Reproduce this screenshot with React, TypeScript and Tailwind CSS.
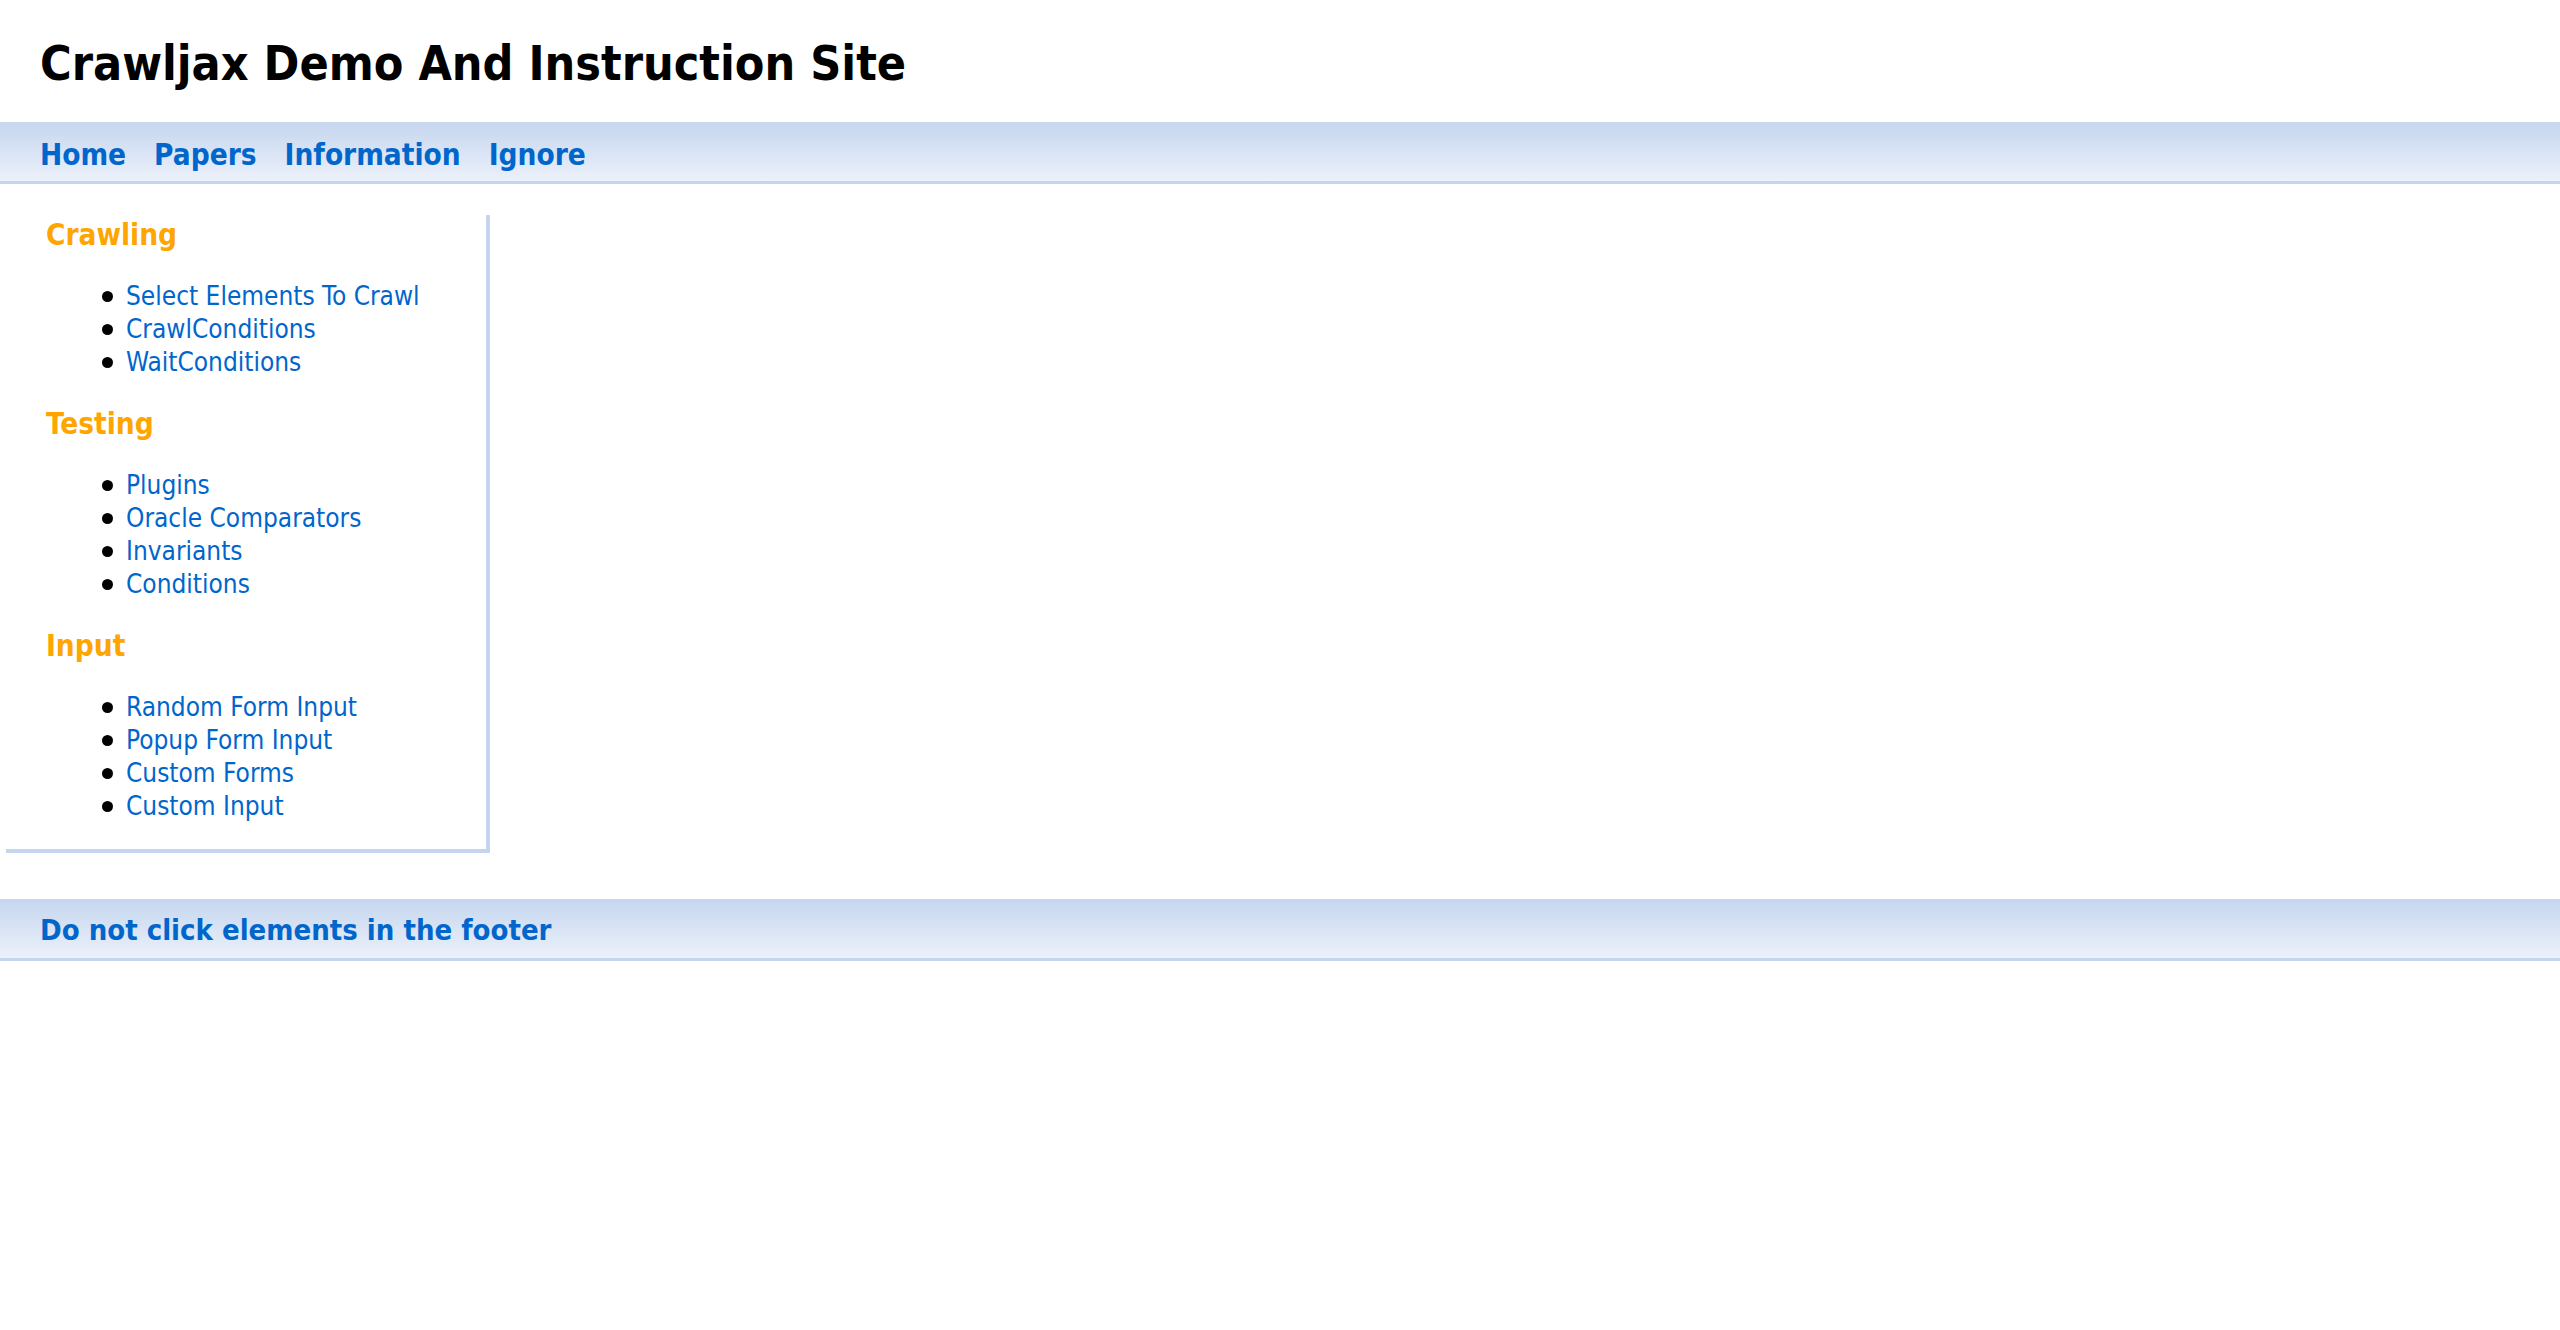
import React from "react";

const sections: { title: string; items: string[] }[] = [
  { title: "Crawling", items: ["Select Elements To Crawl", "CrawlConditions", "WaitConditions"] },
  { title: "Testing", items: ["Plugins", "Oracle Comparators", "Invariants", "Conditions"] },
  { title: "Input", items: ["Random Form Input", "Popup Form Input", "Custom Forms", "Custom Input"] },
];

export default function App() {
  return (
    <div className="min-h-screen bg-white font-['DejaVu_Sans_Condensed','DejaVu_Sans',sans-serif]">
      <header className="h-[122px] flex items-center pl-[40px] pt-[4px]">
        <h1 className="text-[48px] leading-[58px] font-bold text-black">Crawljax Demo And Instruction Site</h1>
      </header>
      <nav className="h-[62px] bg-gradient-to-b from-[#c5d6ee] to-[#ecf1fb] border-b-[3px] border-[#c5d5ed] flex items-center pl-[40px] pt-[7px] gap-[28px]">
        {["Home", "Papers", "Information", "Ignore"].map((l) => (
          <a key={l} href="#" className="text-[29.5px] font-bold text-[#0066cc] leading-[36px]">
            {l}
          </a>
        ))}
      </nav>
      <aside className="mt-[31px] ml-[6px] w-[484px] border-r-4 border-b-4 border-[#c5d5ed] pl-[40px] pt-[3px] pb-[26px]">
        {sections.map((s, i) => (
          <div key={s.title}>
            <h2 className="text-[29.5px] leading-[34px] font-bold text-[#ffa500]">{s.title}</h2>
            <ul className={i === sections.length - 1 ? "mt-[28px]" : "my-[28px]"}>
              {s.items.map((it) => (
                <li key={it} className="flex items-center h-[33px]">
                  <span className="ml-[56px] w-[11px] h-[11px] rounded-full bg-black shrink-0"></span>
                  <a href="#" className="ml-[13px] text-[26px] leading-[33px] text-[#0066cc]">
                    {it}
                  </a>
                </li>
              ))}
            </ul>
          </div>
        ))}
      </aside>
      <footer className="mt-[46px] h-[62px] bg-gradient-to-b from-[#c5d6ee] to-[#ecf1fb] border-b-[3px] border-[#c5d5ed] flex items-center pl-[40px] pt-[3px]">
        <span className="text-[29px] font-bold text-[#0066cc] leading-[34px]">Do not click elements in the footer</span>
      </footer>
    </div>
  );
}
